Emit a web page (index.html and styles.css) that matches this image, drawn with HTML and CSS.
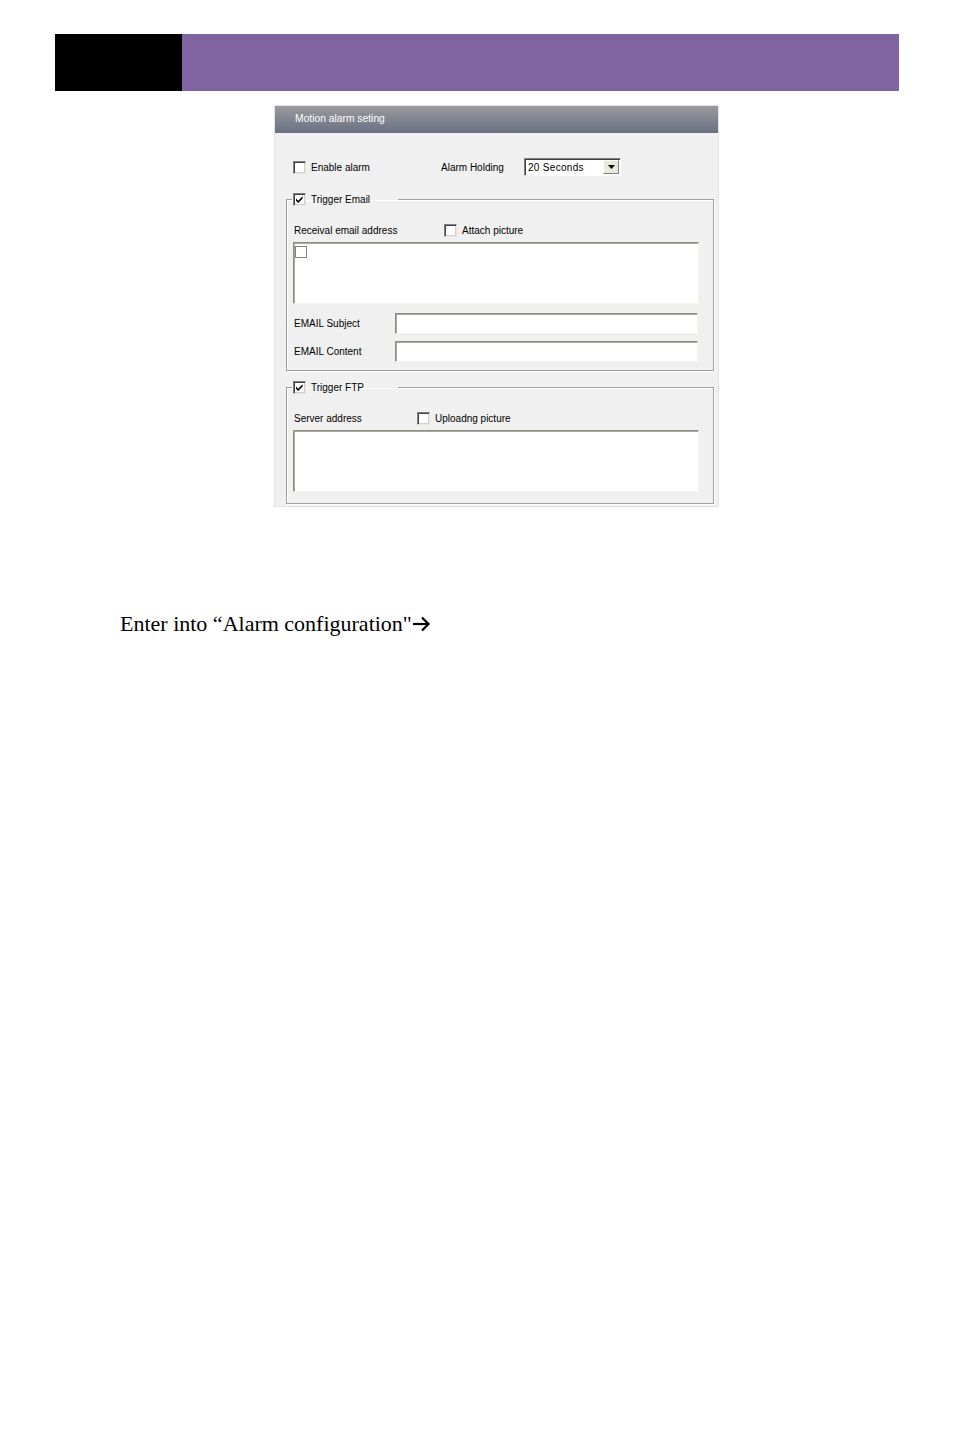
FILE: index.html
```html
<!DOCTYPE html>
<html>
<head>
<meta charset="utf-8">
<link rel="stylesheet" href="styles.css">
</head>
<body>
<div class="topbar"><div class="topbar-black"></div><div class="topbar-purple"></div></div>

<div class="panel">
  <div class="titlebar">Motion alarm seting</div>
  <div class="row1">
    <div class="item enable"><span class="cb"></span><span class="lbl">Enable alarm</span></div>
    <div class="holding-lbl">Alarm Holding</div>
    <div class="select"><span class="select-text">20 Seconds</span><span class="select-btn"><svg width="7" height="4" viewBox="0 0 7 4"><path d="M0 0H7L3.5 4Z" fill="#000"/></svg></span></div>
  </div>

  <fieldset class="group group-email">
    <legend class="legend"><span class="cb checked"><svg width="9" height="9" viewBox="0 0 9 9"><path d="M1 3.5L3.2 5.8L7.6 1.3V3.5L3.2 7.9L1 5.7Z" fill="#000"/></svg></span><span class="lbl">Trigger Email</span></legend>
    <div class="grow-row"><span class="row-lbl w150">Receival email address</span><span class="cb"></span><span class="lbl">Attach picture</span></div>
    <div class="textbox"><span class="cb small"></span></div>
    <div class="field-row first"><span class="field-lbl">EMAIL Subject</span><span class="input"></span></div>
    <div class="field-row"><span class="field-lbl">EMAIL Content</span><span class="input"></span></div>
  </fieldset>

  <fieldset class="group group-ftp">
    <legend class="legend"><span class="cb checked"><svg width="9" height="9" viewBox="0 0 9 9"><path d="M1 3.5L3.2 5.8L7.6 1.3V3.5L3.2 7.9L1 5.7Z" fill="#000"/></svg></span><span class="lbl">Trigger FTP</span></legend>
    <div class="grow-row"><span class="row-lbl w123">Server address</span><span class="cb"></span><span class="lbl">Uploadng picture</span></div>
    <div class="textbox"></div>
  </fieldset>
</div>

<p class="para">Enter into “Alarm configuration"<svg class="arrow" width="19" height="16" viewBox="0 0 19 16"><path d="M1 8H16" stroke="#000" stroke-width="2.2" fill="none"/><path d="M10 1.5L16.5 8L10 14.5" stroke="#000" stroke-width="2.2" fill="none"/></svg></p>
</body>
</html>
```
FILE: styles.css
```css
html, body {
  margin: 0;
  padding: 0;
  background: #fff;
}
body {
  width: 954px;
  font-family: "Liberation Sans", Arial, sans-serif;
}
.topbar {
  display: flex;
  margin: 34px 0 0 55px;
  width: 844px;
  height: 57px;
}
.topbar-black {
  width: 127px;
  background: #000;
}
.topbar-purple {
  flex: 1;
  background: #8064a2;
}
.panel {
  box-sizing: border-box;
  margin: 14px 0 0 274px;
  width: 445px;
  height: 402px;
  border: 1px solid #e4e4e4;
  background: #f0f0f0;
  font-size: 10px;
  color: #000;
}
.titlebar {
  height: 27px;
  box-sizing: border-box;
  padding: 6px 0 0 20px;
  line-height: 13px;
  font-size: 10.3px;
  color: #fff;
  background: linear-gradient(#9a9b9d, #6a7083);
}
.row1 {
  display: flex;
  align-items: center;
  height: 18px;
  margin-top: 25px;
  padding-left: 18px;
}
.item {
  display: flex;
  align-items: center;
}
.enable {
  width: 148px;
}
.cb {
  box-sizing: border-box;
  display: inline-flex;
  align-items: center;
  justify-content: center;
  width: 13px;
  height: 13px;
  flex: none;
  background: #fff;
  border: 1px solid;
  border-color: #808080 #e6e6e6 #e6e6e6 #808080;
  box-shadow: inset 1px 1px 0 #404040, inset -1px -1px 0 #d4d0c8;
}
.cb.small {
  width: 12px;
  height: 12px;
  border: 1px solid #808080;
  box-shadow: none;
  margin: 3px 0 0 0;
}
.lbl {
  margin-left: 5px;
  line-height: 13px;
  white-space: nowrap;
}
.holding-lbl {
  width: 83px;
  white-space: nowrap;
}
.select {
  box-sizing: border-box;
  display: flex;
  align-items: center;
  width: 97px;
  height: 18px;
  background: #fff;
  border: 1px solid;
  border-color: #808080 #fff #fff #808080;
  box-shadow: inset 1px 1px 0 #404040;
}
.select-text {
  flex: 1;
  padding-left: 3px;
  letter-spacing: 0.3px;
}
.select-btn {
  box-sizing: border-box;
  display: flex;
  align-items: center;
  justify-content: center;
  width: 16px;
  height: 14px;
  margin-right: 1px;
  background: #ece9d8;
  border: 1px solid;
  border-color: #fff #808080 #808080 #fff;
}
.group {
  box-sizing: border-box;
  margin: 0 0 0 11px;
  padding: 0 0 0 6px;
  width: 428px;
  border: 1px solid #a0a0a0;
  box-shadow: 1px 1px 0 #fff, inset 1px 1px 0 #fff;
  min-inline-size: 0;
}
.group-email {
  margin-top: 17px;
  height: 178px;
}
.group-ftp {
  margin-top: 10px;
  height: 123px;
}
.legend {
  box-sizing: border-box;
  display: flex;
  align-items: center;
  width: 106px;
  height: 13px;
  padding: 0 0 0 1px;
  margin-left: -1px;
}
.grow-row {
  display: flex;
  align-items: center;
  height: 14px;
  margin-top: 17px;
  padding-left: 1px;
}
.row-lbl {
  white-space: nowrap;
}
.w150 { width: 150px; }
.w123 { width: 123px; }
.textbox {
  box-sizing: border-box;
  width: 406px;
  height: 62px;
  margin-top: 5px;
  padding-left: 1px;
  background: #fff;
  border: 1px solid;
  border-color: #8c8c84 #f4f4ea #f4f4ea #8c8c84;
  box-shadow: inset 1px 1px 0 #a8a8a0;
}
.field-row {
  display: flex;
  align-items: center;
  height: 21px;
  margin-top: 7px;
  padding-left: 1px;
}
.field-row.first {
  margin-top: 9px;
}
.field-lbl {
  width: 101px;
  white-space: nowrap;
}
.input {
  box-sizing: border-box;
  width: 303px;
  height: 21px;
  background: #fff;
  border: 1px solid;
  border-color: #8c8c84 #f4f4ea #f4f4ea #8c8c84;
  box-shadow: inset 1px 1px 0 #a8a8a0;
}
.para {
  margin: 104px 0 0 120px;
  font-family: "Liberation Serif", "Times New Roman", serif;
  font-size: 22px;
  color: #000;
  white-space: nowrap;
}
.arrow {
  vertical-align: -1px;
}
```
